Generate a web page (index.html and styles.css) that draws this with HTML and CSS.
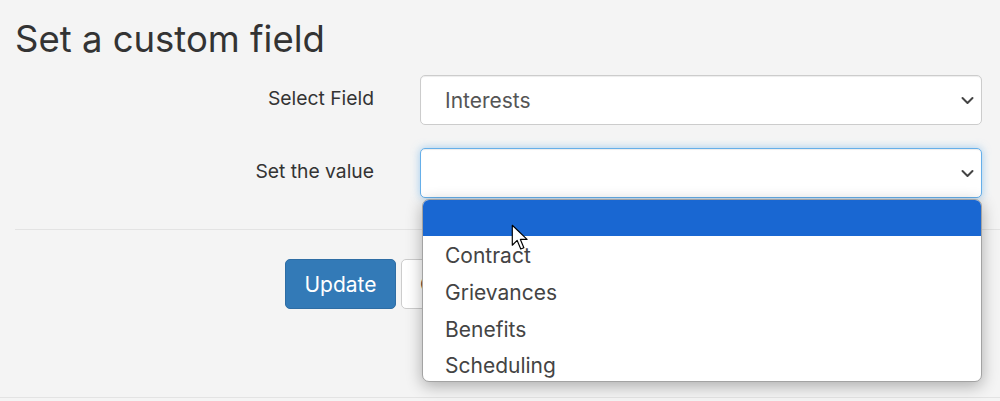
FILE: index.html
```html
<!DOCTYPE html>
<html>
<head>
<meta charset="utf-8">
<link rel="stylesheet" href="styles.css">
</head>
<body>
<div class="page">
  <h1 class="title">Set a custom field</h1>
  <form class="form">
    <div class="row">
      <label class="label">Select Field</label>
      <div class="control">
        <div class="select">
          <span class="value">Interests</span>
          <svg class="chev" width="13" height="9" viewBox="0 0 13 9"><path d="M1.5 2 L6.5 7 L11.5 2" fill="none" stroke="#444" stroke-width="2" stroke-linecap="round" stroke-linejoin="round"/></svg>
        </div>
      </div>
    </div>
    <div class="row">
      <label class="label">Set the value</label>
      <div class="control">
        <div class="select focused">
          <span class="value"></span>
          <svg class="chev" width="13" height="9" viewBox="0 0 13 9"><path d="M1.5 2 L6.5 7 L11.5 2" fill="none" stroke="#444" stroke-width="2" stroke-linecap="round" stroke-linejoin="round"/></svg>
        </div>
        <ul class="menu">
          <li class="opt active"></li>
          <li class="opt">Contract</li>
          <li class="opt">Grievances</li>
          <li class="opt">Benefits</li>
          <li class="opt">Scheduling</li>
        </ul>
        <svg class="cursor" width="18" height="27" viewBox="0 0 14 21"><path d="M1 1 L1 16.5 L4.8 12.8 L7.6 19.5 L10 18.5 L7.3 12 L12.5 12 Z" fill="#fff" stroke="#000" stroke-width="0.9" stroke-linejoin="round"/></svg>
      </div>
    </div>
    <hr class="sep">
    <div class="actions">
      <button type="button" class="btn primary">Update</button>
      <button type="button" class="btn default">Cancel</button>
    </div>
  </form>
</div>
<div class="bottom"></div>
</body>
</html>
```
FILE: styles.css
```css
html, body {
  margin: 0;
  padding: 0;
  background: #f4f4f4;
  font-family: Inter, "Noto Sans", sans-serif;
  color: #333;
  overflow: hidden;
}
.page {
  padding: 0 0 0 15px;
  height: 397px;
  box-sizing: border-box;
}
.title {
  margin: 0;
  padding-top: 18px;
  font-size: 36.5px;
  font-weight: 400;
  line-height: 42px;
  color: #333;
}
.form {
  margin-top: 15px;
}
.row {
  display: grid;
  grid-template-columns: 359px 1fr;
  align-items: center;
  margin-bottom: 23px;
}
.label {
  text-align: right;
  font-size: 19.3px;
  color: #333;
  margin-top: -4px;
}
.control {
  position: relative;
  padding-left: 46px;
  padding-right: 18px;
}
.select {
  height: 50px;
  box-sizing: border-box;
  background: #fff;
  border: 1px solid #ccc;
  border-radius: 5px;
  display: flex;
  align-items: center;
  justify-content: space-between;
  padding: 0 7px 0 24px;
  box-shadow: inset 0 1px 1px rgba(0,0,0,.075);
}
.select .value {
  font-size: 21px;
  color: #555;
}
.select.focused {
  border-color: #66afe9;
  box-shadow: inset 0 1px 1px rgba(0,0,0,.075), 0 0 8px rgba(102,175,233,.6);
}
.menu {
  position: absolute;
  top: 51px;
  left: 48px;
  right: 18px;
  margin: 0;
  padding: 0;
  list-style: none;
  background: #fff;
  border: 1px solid #a3a3a3;
  border-radius: 7px;
  height: 183px;
  box-sizing: border-box;
  overflow: hidden;
  box-shadow: 0 4px 16px rgba(0,0,0,.3);
  z-index: 5;
}
.opt {
  height: 36.75px;
  line-height: 40px;
  padding-left: 22px;
  font-size: 21px;
  color: #444;
}
.opt.active {
  background: #1967d2;
  height: 36px;
}
.cursor {
  position: absolute;
  left: 137px;
  top: 76px;
  z-index: 6;
}
.sep {
  border: 0;
  border-top: 1px solid #e3e3e3;
  margin: 31px 0 0 0;
}
.actions {
  display: flex;
  gap: 5px;
  padding-left: 270px;
  margin-top: 29px;
}
.btn {
  height: 50px;
  border-radius: 5px;
  font-family: Inter, "Noto Sans", sans-serif;
  font-size: 21px;
  padding: 0 18px;
}
.primary {
  background: #337ab7;
  border: 1px solid #2e6da4;
  color: #fff;
  width: 111px;
}
.default {
  background: #fff;
  border: 1px solid #ccc;
  color: #333;
}
.bottom {
  height: 4px;
  border-top: 1px solid #e3e3e3;
  background: #f4f4f4;
}
```
